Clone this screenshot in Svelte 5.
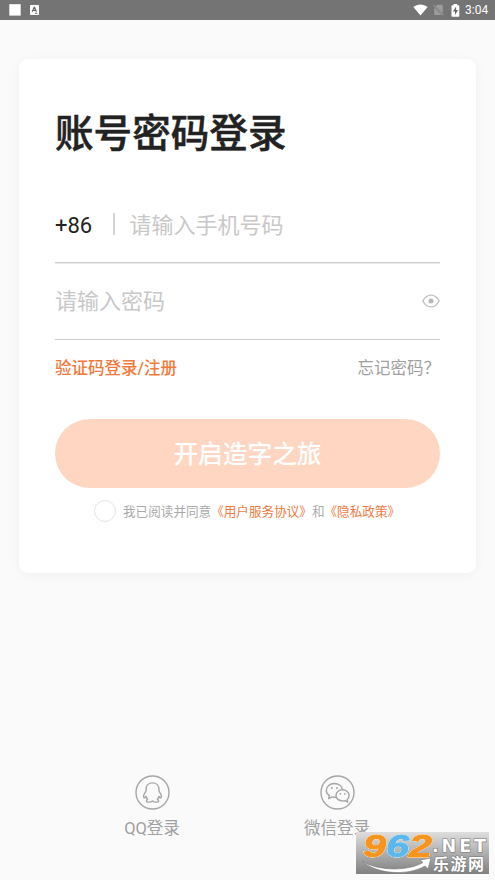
<script>
  let phone = $state('');
  let password = $state('');
  let agreed = $state(false);
</script>

<div class="screen">
  <header class="status">
    <div class="group">
      <svg width="12" height="12" viewBox="0 0 12 12"><rect x="0.3" y="0.2" width="11.4" height="11.4" fill="#fff" /></svg>
      <svg class="square-a" width="9" height="10" viewBox="0 0 9 10">
        <rect width="9" height="10" rx="0.8" fill="#fff" />
        <path d="M2.2 6.8 4.1 2.4h.5l1.9 4.4M3 5.4h2.7M5 8.2h2.3" fill="none" stroke="#666" stroke-width="1.1" />
      </svg>
    </div>
    <div class="group">
      <svg width="15" height="12" viewBox="0 0 15 12"><path d="M7.5 11.6.4 3.1C2.4 1.3 4.8.4 7.5.4s5.1.9 7.1 2.7z" fill="#fff" /></svg>
      <svg class="sim" width="11" height="12" viewBox="0 0 11 12">
        <path d="M4.2.8H9q.8 0 .8.8v7.6L2.8 2.2zM1.2 3.4 8.8 11H2q-.8 0-.8-.8z" fill="#9c9c9c" />
        <path d="m.5 1.1 10 10.2" stroke="#a8a8a8" stroke-width="1" />
      </svg>
      <svg class="battery" width="9" height="13" viewBox="0 0 9 13">
        <path d="M2.6 1.2V0h3.6v1.2h1.4q.7 0 .7.7v10q0 .8-.7.8H1.2q-.7 0-.7-.8v-10q0-.7.7-.7z" fill="#fff" />
        <path d="M5.1 2.6 2 7.4h2v3.5l3-4.9H5.1z" fill="#666" />
      </svg>
      <span class="clock">3:04</span>
    </div>
  </header>

  <main class="card">
    <h1>账号密码登录</h1>
    <div class="field phone">
      <span class="code">+86</span>
      <i class="divider"></i>
      <input type="tel" placeholder="请输入手机号码" bind:value={phone} />
    </div>
    <div class="field secret">
      <input type="password" placeholder="请输入密码" bind:value={password} />
      <svg width="18" height="14" viewBox="0 0 18 14">
        <path d="M.8 7C3 3 5.6 1.1 9 1.1S15 3 17.2 7C15 11 12.4 12.900 9 12.900S3 11 .8 7z" fill="none" stroke="#c0c0c0" stroke-width="1.4" />
        <circle cx="9" cy="7" r="2.5" fill="#b8b8b8" />
      </svg>
    </div>
    <div class="links">
      <a class="sms" href="#sms">验证码登录/注册</a>
      <a class="forgot" href="#forgot">忘记密码？</a>
    </div>
    <button class="submit">开启造字之旅</button>
    <div class="terms">
      <button class="check" class:agreed aria-label="同意" onclick={() => (agreed = !agreed)}></button>
      <p>我已阅读并同意<b>《用户服务协议》</b>和<b>《隐私政策》</b></p>
    </div>
  </main>

  <footer>
    <div class="social">
      <svg width="35" height="35" viewBox="0 0 35 35" fill="none" stroke="#a6a6a6" stroke-width="1.4" stroke-linejoin="round">
        <circle cx="17.5" cy="17.5" r="16.5" />
        <path d="M17.5 7.900c-4 0-6.400 2.700-6.400 6.500 0 1.100-.1 1.800-.7 2.800-1.400 2.100-2.300 4.400-1.400 5.500.5.4 1.300-.3 2-1.200.3 1.200.8 2 1.600 2.800-1.600.8-1.700 2.600.2 2.800 1.800.2 3.600-.2 4.700-1.200 1.100 1 2.900 1.400 4.700 1.200 1.900-.2 1.800-2 .2-2.800.8-.8 1.300-1.600 1.600-2.800.7.9 1.500 1.600 2 1.200.9-1.100 0-3.400-1.400-5.500-.6-1-.7-1.700-.7-2.800 0-3.800-2.400-6.500-6.400-6.500z" />
      </svg>
      <span>QQ登录</span>
    </div>
    <div class="social">
      <svg width="35" height="35" viewBox="0 0 35 35" fill="none" stroke="#a6a6a6" stroke-width="1.4" stroke-linejoin="round">
        <circle cx="17.5" cy="17.5" r="16.5" />
        <path d="M16 22.2c-1.2.2-2.6 0-3.7-.3L8.7 23.7l.7-3.1c-2-1.3-3.1-3-3.1-5.1 0-4 3.6-7 8.1-7 4.3 0 7.8 2.6 8.1 6.2" />
        <path d="M22.5 14.8c-3.7 0-6.5 2.5-6.5 5.6s2.8 5.6 6.5 5.6c.9 0 1.7-.1 2.5-.4l2.8 1.5-.6-2.6c1.2-1 1.9-2.4 1.9-4.1 0-3.1-2.9-5.6-6.6-5.6z" />
        <g fill="#a6a6a6" stroke="none"><circle cx="11.8" cy="13.1" r="1" /><circle cx="17" cy="13.1" r="1" /><circle cx="20.3" cy="18.8" r=".9" /><circle cx="24.8" cy="18.8" r=".9" /></g>
      </svg>
      <span>微信登录</span>
    </div>
  </footer>

  <svg class="watermark" width="139" height="55" viewBox="0 0 139 55">
    <defs>
      <linearGradient id="plate" x1="0" y1="0" x2="0" y2="1">
        <stop offset="0" stop-color="#dedede" /><stop offset="1" stop-color="#808080" />
      </linearGradient>
    </defs>
    <rect x="0" y="7" width="133" height="42" fill="url(#plate)" />
    <path d="M6 36c14 9.500 45 11 61 1.500l-3-2.500 11-2-3 11-3-3C51 51.500 20 49 6 36z" fill="#fff" stroke="#777" stroke-width=".6" />
    <g class="digits">
      <text x="7" y="31.500" textLength="23" lengthAdjust="spacingAndGlyphs" fill="#f7941d" stroke="#f7941d">9</text>
      <text x="30" y="31.500" textLength="23" lengthAdjust="spacingAndGlyphs" fill="#5cb8ea" stroke="#5cb8ea">6</text>
      <text x="53" y="31.500" textLength="23" lengthAdjust="spacingAndGlyphs" fill="#f7941d" stroke="#f7941d">2</text>
    </g>
    <text class="net" x="76" y="27" textLength="54" lengthAdjust="spacing">.NET</text>
    <text class="site" x="77" y="45" textLength="51">乐游网</text>
  </svg>
</div>

<style>
  :global(body) { margin: 0; }
  .screen {
    position: relative;
    width: 495px;
    height: 880px;
    overflow: hidden;
    box-sizing: border-box;
    background: #fafafa;
    font-family: Roboto, "Noto Sans CJK SC", sans-serif;
    display: flex;
    flex-direction: column;
  }
  .status {
    height: 20px;
    flex: none;
    background: #747474;
    display: flex;
    justify-content: space-between;
    padding: 0 6px 0 9px;
  }
  .group { display: flex; align-items: center; }
  .square-a { margin-left: 9px; }
  .sim { margin-left: 5px; }
  .battery { margin-left: 7px; }
  .clock { margin-left: 5px; color: #fff; font-size: 12px; line-height: 20px; width: 24px; white-space: nowrap; }
  .card {
    width: 457px;
    height: 514px;
    flex: none;
    box-sizing: border-box;
    margin: 39px 0 0 19px;
    padding: 45px 36px 0;
    border-radius: 9px;
    background: #fff;
    box-shadow: 0 2px 12px rgba(0, 0, 0, .045);
  }
  h1 { margin: 0; height: 60px; line-height: 60px; font-size: 38.6px; font-weight: 500; color: #222; -webkit-text-stroke: .5px #222; }
  .field { display: flex; align-items: center; box-sizing: border-box; border-bottom: 1px solid #cdcdcd; }
  .phone { height: 77px; margin-top: 22px; padding-top: 2px; box-shadow: 0 1px #ebebeb; }
  .secret { height: 77px; }
  .code { width: 58px; font-size: 22px; padding-top: 1px; color: #222; }
  .divider { width: 2px; height: 22px; background: #d4d4d4; margin: 0 15px 2px 0; }
  input {
    flex: 1;
    min-width: 0;
    padding: 2px 0 0;
    border: 0;
    outline: 0;
    background: none;
    font: 22px/34px Roboto, "Noto Sans CJK SC", sans-serif;
    color: #222;
  }
  .phone input { margin-left: -.5px; }
  input::placeholder { color: #c8c8c8; opacity: 1; }
  .links { display: flex; justify-content: space-between; height: 28px; margin-top: 15px; line-height: 28px; font-size: 16.5px; }
  a { text-decoration: none; }
  .sms { color: #f07a3c; font-weight: 500; }
  .forgot { color: #a0a0a0; }
  .submit {
    display: block;
    width: 385px;
    height: 69px;
    margin-top: 36px;
    padding: 2px 0 0;
    border: 0;
    border-radius: 35px;
    background: #ffd6c1;
    color: #fff;
    font: 500 24.7px/67px Roboto, "Noto Sans CJK SC", sans-serif;
  }
  .terms { display: flex; align-items: center; margin: 12px 0 0 39px; height: 22px; }
  .check { width: 22px; height: 22px; padding: 0; border: 1.5px solid #e6e6e6; border-radius: 50%; background: #fff; }
  .check.agreed { background: #f07a3c; }
  .terms p { margin: 1px 0 0 7px; padding-top: 1px; font-size: 12.6px; line-height: 22px; color: #aaa; white-space: nowrap; }
  .terms b { font-weight: 400; color: #ee7b42; }
  footer { display: flex; justify-content: center; gap: 85px; padding-right: 6px; margin-top: 202px; }
  .social { width: 100px; display: flex; flex-direction: column; align-items: center; }
  .social span { margin-top: 7px; font-size: 16.5px; line-height: 24px; color: #a0a0a0; }
  .watermark { position: absolute; left: 356px; top: 825px; }
  .digits text {
    font: italic 700 32px "Liberation Sans", sans-serif;
    stroke-width: 1px;
    stroke-linejoin: round;
    filter: drop-shadow(0 0 .6px #fff) drop-shadow(0 0 .6px #fff);
  }
  .net { font: 700 17.5px "DejaVu Sans", sans-serif; fill: #fff; stroke: #777; stroke-width: 1.2px; paint-order: stroke; }
  .site { font: 700 16px "Noto Sans CJK SC", sans-serif; fill: #fff; stroke: #777; stroke-width: 1px; paint-order: stroke; }
</style>
